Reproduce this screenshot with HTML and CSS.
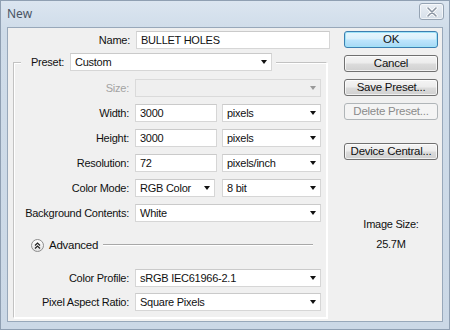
FILE: index.html
```html
<!DOCTYPE html>
<html>
<head>
<meta charset="utf-8">
<link rel="stylesheet" href="styles.css">
</head>
<body>
<div class="window">
  <div class="titlebar">
    <span class="title">New</span>
    <div class="close">
      <svg width="12" height="10" viewBox="0 0 12 10"><path d="M2 1 L10 9 M10 1 L2 9" stroke="#fff" stroke-width="3.2" stroke-linecap="round"/><path d="M2 1 L10 9 M10 1 L2 9" stroke="#8a95a3" stroke-width="1.6" stroke-linecap="round"/></svg>
    </div>
  </div>
  <div class="client">
    <div class="left">
      <div class="row name-row">
        <span class="lbl name-lbl">Name:</span>
        <div class="field name-field">BULLET HOLES</div>
      </div>
      <fieldset class="preset">
        <legend class="legend">
          <span class="lbl preset-lbl">Preset:</span>
          <div class="select preset-select">Custom<span class="arrow"></span></div>
        </legend>
        <div class="rows top-rows">
          <div class="row"><span class="lbl col-lbl disabled">Size:</span><div class="select full dis"><span class="arrow grey"></span></div></div>
          <div class="row"><span class="lbl col-lbl">Width:</span><div class="field num">3000</div><div class="select unit">pixels<span class="arrow"></span></div></div>
          <div class="row"><span class="lbl col-lbl">Height:</span><div class="field num">3000</div><div class="select unit">pixels<span class="arrow"></span></div></div>
          <div class="row"><span class="lbl col-lbl">Resolution:</span><div class="field num">72</div><div class="select unit">pixels/inch<span class="arrow"></span></div></div>
          <div class="row"><span class="lbl col-lbl">Color Mode:</span><div class="select mode">RGB Color<span class="arrow"></span></div><div class="select unit">8 bit<span class="arrow"></span></div></div>
          <div class="row"><span class="lbl col-lbl">Background Contents:</span><div class="select full">White<span class="arrow"></span></div></div>
        </div>
        <div class="advanced">
          <div class="adv-btn"><svg width="7" height="7" viewBox="0 0 7 7"><path d="M1 3.5 L3.5 1 L6 3.5 M1 6.5 L3.5 4 L6 6.5" fill="none" stroke="#222" stroke-width="1.2"/></svg></div>
          <span class="adv-text">Advanced</span>
          <div class="adv-line"></div>
        </div>
        <div class="rows bottom-rows">
          <div class="row"><span class="lbl col-lbl">Color Profile:</span><div class="select full">sRGB IEC61966-2.1<span class="arrow"></span></div></div>
          <div class="row"><span class="lbl col-lbl">Pixel Aspect Ratio:</span><div class="select full">Square Pixels<span class="arrow"></span></div></div>
        </div>
      </fieldset>
    </div>
    <div class="right">
      <div class="btn ok">OK</div>
      <div class="btn">Cancel</div>
      <div class="btn">Save Preset...</div>
      <div class="btn off">Delete Preset...</div>
      <div class="btn device">Device Central...</div>
      <div class="imgsize">
        <div class="is-title">Image Size:</div>
        <div class="is-value">25.7M</div>
      </div>
    </div>
  </div>
</div>
</body>
</html>
```

FILE: styles.css
```css
* { box-sizing: border-box; }
html, body { margin: 0; padding: 0; }
body {
  width: 450px; height: 330px; overflow: hidden;
  font-family: "Liberation Sans", Arial, sans-serif;
  font-size: 11px; letter-spacing: -0.25px; color: #111;
}
.window {
  width: 450px; height: 330px;
  background: linear-gradient(#dbe5f0, #cfdce9 30px, #cbd8e6);
  border: 1px solid #8f9fb2;
  padding: 0 6px 7px 6px;
  display: flex; flex-direction: column;
}
.titlebar {
  height: 26px; flex: none;
  display: flex; align-items: center; justify-content: space-between;
}
.title {
  font-family: "Noto Sans", "Open Sans", sans-serif;
  font-size: 12px; letter-spacing: 0; color: #4a5564;
  margin-left: 0; margin-top: -1px;
}
.close {
  width: 25px; height: 17px; margin-top: -5px; margin-right: -1px;
  border: 1px solid #95a3b3; border-radius: 3px;
  background: linear-gradient(#e9eef4, #d6dfe9);
  box-shadow: inset 0 0 0 1px rgba(255,255,255,0.6);
  display: flex; align-items: center; justify-content: center;
}
.client {
  flex: 1;
  background: #f0f0f0;
  border: 1px solid #98a8ba;
  display: flex;
}
.left { width: 322px; flex: none; }
.row { display: flex; align-items: center; height: 18px; }
.lbl { text-align: right; white-space: nowrap; }
.name-row { margin-top: 3px; }
.name-lbl { width: 122px; margin-right: 6px; }
.field, .select {
  height: 18px; line-height: 16px;
  background: #fff;
  border: 1px solid #d6d6d6;
  border-top-color: #cacaca;
  padding-left: 4px;
  white-space: nowrap;
}
.name-field { width: 194px; }
.select { display: flex; align-items: center; }
.arrow {
  margin-left: auto; margin-right: 4px;
  width: 0; height: 0;
  border-left: 3.5px solid transparent;
  border-right: 3.5px solid transparent;
  border-top: 4px solid #111;
}
.arrow.grey { border-top-color: #9a9a9a; }
.preset {
  margin: 4px 0 0 5px; padding: 0 0 5px 0;
  width: 314px; height: 265px;
  border-color: #c2c2c2 #fff #fff #c2c2c2;
  border-style: solid;
  border-width: 1px;
  box-shadow: 1px 1px 0 #fff, inset 1px 1px 0 #fff;
}
.legend {
  display: flex; align-items: center;
  padding: 0 4px 0 4px; margin-left: 7px;
  background: #f0f0f0;
}
.preset-lbl { width: 39px; margin-right: 6px; }
.preset-select { width: 202px; }
.rows { display: flex; flex-direction: column; }
.top-rows { margin-top: 8px; gap: 7px; }
.bottom-rows { margin-top: 17px; gap: 6px; }
.col-lbl { width: 115px; margin-right: 6px; }
.disabled { color: #a3a3a3; }
.full { width: 186px; }
.dis { background: #efefef; border-color: #dadada; }
.num { width: 82px; margin-right: 5px; }
.mode { width: 80px; margin-right: 7px; }
.unit { width: 99px; }
.advanced {
  display: flex; align-items: center;
  margin-top: 16px; height: 14px;
  padding-left: 17px;
}
.adv-btn {
  width: 13px; height: 13px; border-radius: 50%;
  border: 1px solid #8d8d8d;
  background: linear-gradient(#ffffff, #e2e2e2);
  display: flex; align-items: center; justify-content: center;
}
.adv-text { margin-left: 5px; font-size: 11.5px; }
.adv-line {
  width: 210px; margin-left: 5px; height: 2px;
  border-top: 1px solid #a8a8a8; border-bottom: 1px solid #fff;
}
.right {
  margin-left: 14px; width: 94px;
  display: flex; flex-direction: column;
  padding-top: 3px;
}
.btn {
  height: 17px; margin-bottom: 7px;
  border: 1px solid #707070; border-radius: 3px;
  background: linear-gradient(#f4f4f4 0%, #ececec 48%, #dcdcdc 52%, #d0d0d0 100%);
  box-shadow: inset 0 0 0 1px rgba(255,255,255,0.7);
  text-align: center; line-height: 15px;
  font-size: 11.5px; color: #111;
}
.btn.ok {
  border-color: #3c7fb1;
  background: linear-gradient(#e8f6fd 0%, #d9f0fc 48%, #bee6fd 52%, #a7d9f5 100%);
  box-shadow: inset 0 0 0 1px #9fe3f8;
}
.btn.off {
  border-color: #b0b5b8; color: #8b8b8b;
  background: #f4f4f4; box-shadow: none;
}
.btn.device { margin-top: 16px; }
.imgsize { margin-top: 50px; text-align: center; }
.is-title { line-height: 14px; }
.is-value { line-height: 14px; margin-top: 6px; }
```
